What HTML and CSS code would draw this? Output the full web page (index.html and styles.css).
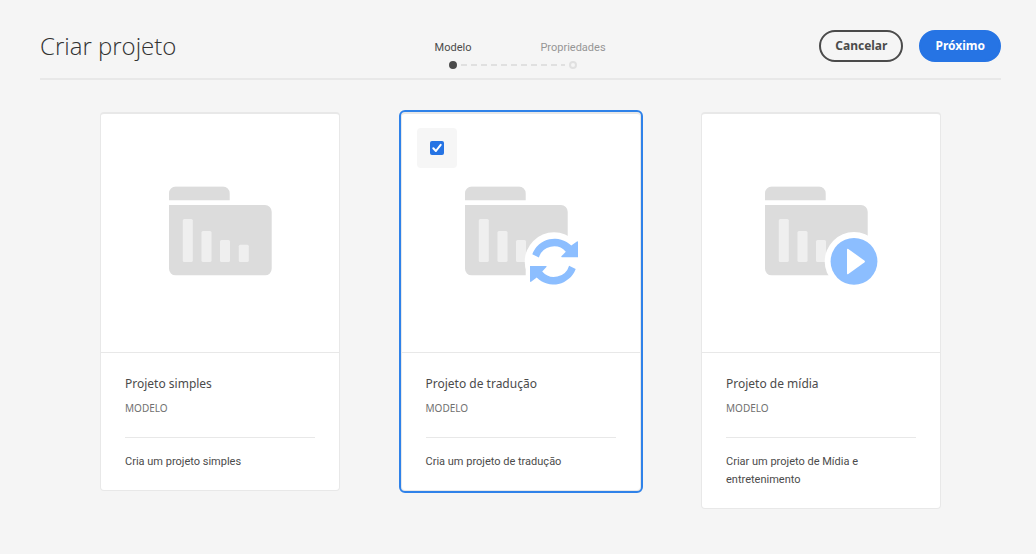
FILE: index.html
```html
<!DOCTYPE html>
<html lang="pt-BR">
<head>
<meta charset="utf-8">
<meta name="viewport" content="width=device-width, initial-scale=1">
<title>Criar projeto</title>
<link rel="stylesheet" href="styles.css">
</head>
<body>
<svg class="defs" aria-hidden="true">
  <symbol id="folder" viewBox="0 0 113 99">
    <path class="folder-fill" d="M0 14V7a6.700 6.700 0 0 1 6.700-6.700H54A6.700 6.700 0 0 1 60.700 7v7zM0 18.700H96a6.700 6.700 0 0 1 6.700 6.700V82.500a6.500 6.500 0 0 1-6.500 6.500H6.500A6.500 6.500 0 0 1 0 82.500z"/>
    <g class="folder-bars">
      <rect x="13.800" y="32.800" width="10" height="43" rx="1.500"/>
      <rect x="32.500" y="44.600" width="10" height="31.200" rx="1.500"/>
      <rect x="51" y="53.600" width="10" height="22.200" rx="1.500"/>
      <rect x="69.800" y="58.400" width="10" height="17.400" rx="1.500"/>
    </g>
  </symbol>
</svg>

<header class="header">
  <h1 class="title">Criar projeto</h1>
  <ol class="steps">
    <li class="step step-current" aria-current="step"><span>Modelo</span><i class="dot"></i></li>
    <li class="step"><span>Propriedades</span><i class="dot"></i></li>
  </ol>
  <div class="actions">
    <button class="button" type="button">Cancelar</button>
    <button class="button button-primary" type="button">Próximo</button>
  </div>
</header>

<main class="cards">
  <article class="card">
    <div class="preview">
      <svg class="art" aria-hidden="true" viewBox="0 -0.300 103 99" width="103" height="99">
        <use href="#folder" width="113" height="99"/>
      </svg>
    </div>
    <div class="content">
      <h2 class="name">Projeto simples</h2>
      <p class="kind">MODELO</p>
      <p class="description">Cria um projeto simples</p>
    </div>
  </article>

  <article class="card card-selected">
    <div class="preview">
      <label class="select"><input class="checkbox" type="checkbox" checked aria-label="Projeto de tradução"></label>
      <svg class="art" aria-hidden="true" viewBox="0 -0.300 111 99" width="111" height="99">
        <use href="#folder" width="113" height="99"/>
        <path class="halo" d="M60.700 76H113V99H60.700z"/>
        <circle class="halo" cx="89" cy="75.300" r="29.300"/>
        <g class="badge">
          <path id="arrow" d="M67.300 68A23.700 23.700 0 0 1 106.300 59.300L111.900 55.200Q113 54.600 113 55.800V71H96.900Q95.800 70.600 96.600 69.800L100.800 65.400A15.700 15.700 0 0 0 73.900 71.200z"/>
          <use href="#arrow" transform="rotate(180 89 75.300)"/>
        </g>
      </svg>
    </div>
    <div class="content">
      <h2 class="name">Projeto de tradução</h2>
      <p class="kind">MODELO</p>
      <p class="description">Cria um projeto de tradução</p>
    </div>
  </article>

  <article class="card">
    <div class="preview">
      <svg class="art" aria-hidden="true" viewBox="0 -0.300 113 99" width="113" height="99">
        <use href="#folder" width="113" height="99"/>
        <circle class="halo" cx="89" cy="75.100" r="29.300"/>
        <circle class="badge" cx="89" cy="75.100" r="23.400"/>
        <path class="halo" d="M82 63.300q0-1.500 1.300-.6L99.300 74.100q1.300 1 0 2L83.300 87.600q-1.300.8-1.300-.6z"/>
      </svg>
    </div>
    <div class="content">
      <h2 class="name">Projeto de mídia</h2>
      <p class="kind">MODELO</p>
      <p class="description">Criar um projeto de Mídia e entretenimento</p>
    </div>
  </article>
</main>
</body>
</html>
```
FILE: styles.css
```css
* {
  box-sizing: border-box;
}

body {
  margin: 0;
  padding: 0 35px 0 40px;
  background: #f5f5f5;
  color: #4b4b4b;
  font-family: "Noto Sans", "Open Sans", sans-serif;
  font-size: 12px;
  line-height: 18px;
}

h1, h2, p, ol {
  margin: 0;
  padding: 0;
  font-weight: 400;
}

.defs {
  display: none;
}

.header {
  display: grid;
  grid-template-columns: 1fr auto 1fr;
  align-items: start;
  min-height: 80px;
  padding-top: 30px;
  border-bottom: 2px solid #e8e8e8;
}

.title {
  color: #323232;
  font-family: "Open Sans", "Noto Sans", sans-serif;
  font-size: 24px;
  font-weight: 300;
  line-height: 32px;
}

.steps {
  display: flex;
  margin-right: 15px;
  padding-top: 9px;
  list-style: none;
  font-family: Roboto, "Noto Sans", sans-serif;
  font-size: 11px;
}

.step {
  display: flex;
  flex-direction: column;
  align-items: center;
  gap: 4px;
  width: 120px;
  color: #959595;
}

.step-current {
  position: relative;
  color: #4b4b4b;
}

.dot {
  width: 8px;
  height: 8px;
  border: 2px solid #e0e0e0;
  border-radius: 50%;
}

.step-current .dot {
  border-color: #4b4b4b;
  background: #4b4b4b;
}

/* Dashed connector to the next step */
.step-current::after {
  content: "";
  position: absolute;
  left: 68px;
  bottom: 3px;
  width: 104px;
  height: 2px;
  background: repeating-linear-gradient(90deg, #e0e0e0 0 6px, transparent 6px 10px);
}

.actions {
  display: flex;
  justify-content: flex-end;
  gap: 16px;
}

.button {
  height: 32px;
  padding: 0 14px;
  border: 2px solid #4b4b4b;
  border-radius: 16px;
  background: transparent;
  color: #4b4b4b;
  font: 700 12px/18px "Noto Sans", "Open Sans", sans-serif;
}

.button-primary {
  border-color: #2674e4;
  background: #2674e4;
  color: #fff;
}

.cards {
  display: flex;
  flex-wrap: wrap;
  justify-content: space-between;
  align-items: flex-start;
  gap: 32px;
  padding: 32px 60px;
}

.card {
  width: 240px;
  border: 1px solid #e8e8e8;
  border-top-width: 2px;
  border-radius: 4px;
  background: #fff;
}

.card-selected {
  outline: 2px solid #2f82e9;
}

.preview {
  position: relative;
  display: flex;
  justify-content: center;
  height: 239px;
  padding-top: 72px;
  border-bottom: 1px solid #e8e8e8;
}

.art {
  display: block;
  overflow: visible;
}

.folder-fill {
  fill: #dcdcdc;
}

.folder-bars {
  fill: #efefef;
}

.halo {
  fill: #fff;
}

.badge {
  fill: #8cbeff;
}

.select {
  position: absolute;
  top: 14px;
  left: 15px;
  display: grid;
  place-items: center;
  width: 40px;
  height: 40px;
  border-radius: 4px;
  background: #f6f6f6;
}

.checkbox {
  appearance: none;
  width: 14px;
  height: 14px;
  margin: 0;
  border-radius: 2px;
  background: #2674e4 url("data:image/svg+xml,%3Csvg xmlns='http://www.w3.org/2000/svg' viewBox='0 0 14 14'%3E%3Cpath d='M3.300 7.300 5.900 10 10.700 3.800' fill='none' stroke='white' stroke-width='2' stroke-linecap='round' stroke-linejoin='round'/%3E%3C/svg%3E");
}

.content {
  padding: 22px 24px 19px;
}

.name {
  font-size: 12px;
}

.kind {
  padding: 6px 0 20px;
  border-bottom: 1px solid #e8e8e8;
  color: #707070;
  font-size: 10px;
}

.description {
  padding-top: 15px;
  font-family: Roboto, "Noto Sans", sans-serif;
  font-size: 11px;
}
```
